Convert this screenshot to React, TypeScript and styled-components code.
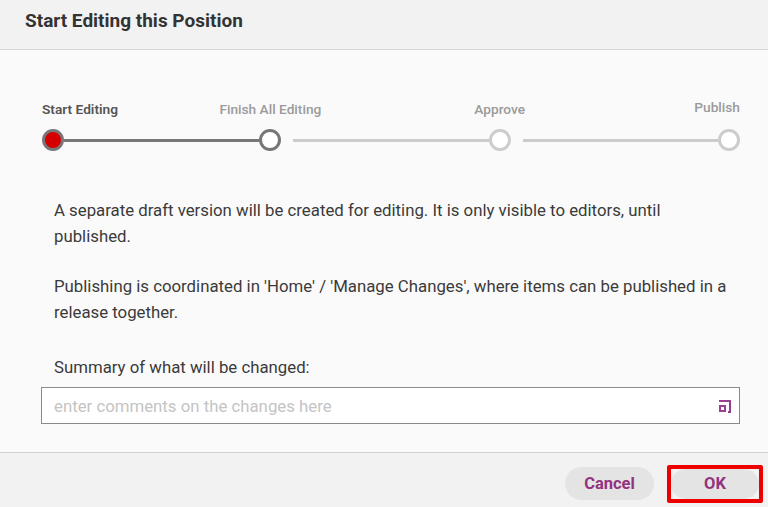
import React from "react";
import styled, { createGlobalStyle } from "styled-components";

const Global = createGlobalStyle`
  html, body { margin: 0; padding: 0; }
  body { font-family: Roboto, "Noto Sans", Arial, sans-serif; background: #fafafa; }
  * { box-sizing: border-box; }
`;

const Dialog = styled.div`
  width: 768px;
  height: 507px;
  display: flex;
  flex-direction: column;
  background: #fafafa;
`;

const Header = styled.div`
  height: 50px;
  flex: none;
  background: #f2f2f2;
  border-bottom: 1px solid #d6d6d6;
  display: flex;
  align-items: center;
  padding: 0 0 8px 25px;
`;

const Title = styled.h1`
  margin: 0;
  font-size: 19px;
  font-weight: 700;
  color: #333;
`;

const Body = styled.div`
  flex: 1;
  padding: 49px 28px 0 41px;
  display: flex;
  flex-direction: column;
`;

const Stepper = styled.div`
  display: flex;
  align-items: flex-end;
  margin: 0 0 46px 1px;
`;

const Step = styled.div<{ $align: "start" | "center" | "end" }>`
  width: 22px;
  flex: none;
  display: flex;
  flex-direction: column;
  align-items: ${(p) => (p.$align === "start" ? "flex-start" : p.$align === "end" ? "flex-end" : "center")};
  gap: 12px;
`;

const StepLabel = styled.div<{ $active?: boolean; $raise?: number }>`
  white-space: nowrap;
  font-size: 13.7px;
  line-height: 16px;
  font-weight: ${(p) => (p.$active ? 600 : 500)};
  color: ${(p) => (p.$active ? "#555" : "#9a9a9a")};
  margin-bottom: ${(p) => p.$raise || 0}px;
`;

const Dot = styled.div<{ $state: "current" | "next" | "todo" }>`
  width: 22px;
  height: 22px;
  border-radius: 50%;
  border: 3px solid ${(p) => (p.$state === "todo" ? "#cccccc" : "#777777")};
  background: ${(p) => (p.$state === "current" ? "#d40000" : "#ffffff")};
`;

const Segment = styled.div<{ $done?: boolean; $gap?: boolean }>`
  flex: 1;
  height: 3px;
  margin-bottom: 9.5px;
  margin-left: ${(p) => (p.$gap ? 12 : 0)}px;
  background: ${(p) => (p.$done ? "#777777" : "#cccccc")};
`;

const Text = styled.p`
  margin: 0 0 24px 13px;
  font-size: 16.8px;
  line-height: 26px;
  color: #3a3a3a;
  max-width: 686px;
`;

const Label = styled(Text)`
  margin-top: 5px;
  margin-bottom: 7px;
`;

const InputBox = styled.div`
  height: 37px;
  border: 1px solid #8a8a8a;
  background: #ffffff;
  display: flex;
  align-items: center;
  padding: 0 6px 0 12px;
`;

const Input = styled.input`
  flex: 1;
  border: none;
  outline: none;
  background: transparent;
  font-family: Roboto, Arial, sans-serif;
  font-size: 16.8px;
  color: #333;
  padding: 0;
  &::placeholder { color: #c4c4c4; }
`;

const ExpandIcon = styled.svg`
  width: 16px;
  height: 16px;
  flex: none;
`;

const Footer = styled.div`
  height: 55px;
  flex: none;
  background: #f2f2f2;
  border-top: 1px solid #d0d0d0;
  display: flex;
  align-items: center;
  justify-content: flex-end;
  padding: 7px 5px 0 0;
  gap: 13px;
`;

const Button = styled.button<{ $w: number; $h: number }>`
  width: ${(p) => p.$w}px;
  height: ${(p) => p.$h}px;
  border: none;
  border-radius: 17px;
  background: #e4e4e4;
  color: #93337f;
  font-family: Roboto, Arial, sans-serif;
  font-size: 16.5px;
  font-weight: 700;
  cursor: pointer;
  padding: 0;
`;

const Highlight = styled.div`
  border: 4px solid #ee0000;
  border-radius: 2px;
  display: flex;
`;

export default function App() {
  return (
    <>
      <Global />
      <Dialog>
        <Header>
          <Title>Start Editing this Position</Title>
        </Header>
        <Body>
          <Stepper>
            <Step $align="start">
              <StepLabel $active>Start Editing</StepLabel>
              <Dot $state="current" />
            </Step>
            <Segment $done />
            <Step $align="center">
              <StepLabel>Finish All Editing</StepLabel>
              <Dot $state="next" />
            </Step>
            <Segment $gap />
            <Step $align="center">
              <StepLabel>Approve</StepLabel>
              <Dot $state="todo" />
            </Step>
            <Segment $gap />
            <Step $align="end">
              <StepLabel $raise={2}>Publish</StepLabel>
              <Dot $state="todo" />
            </Step>
          </Stepper>
          <Text>
            A separate draft version will be created for editing. It is only visible to editors, until published.
          </Text>
          <Text>
            Publishing is coordinated in 'Home' / 'Manage Changes', where items can be published in a release together.
          </Text>
          <Label>Summary of what will be changed:</Label>
          <InputBox>
            <Input placeholder="enter comments on the changes here" />
            <ExpandIcon viewBox="0 0 16 16" fill="none" stroke="#9c3f8f" strokeWidth="2">
              <path d="M2 3 H13 V14 H11" />
              <rect x="3" y="8" width="5" height="5" />
            </ExpandIcon>
          </InputBox>
        </Body>
        <Footer>
          <Button $w={89} $h={33}>Cancel</Button>
          <Highlight>
            <Button $w={88} $h={30}>OK</Button>
          </Highlight>
        </Footer>
      </Dialog>
    </>
  );
}
